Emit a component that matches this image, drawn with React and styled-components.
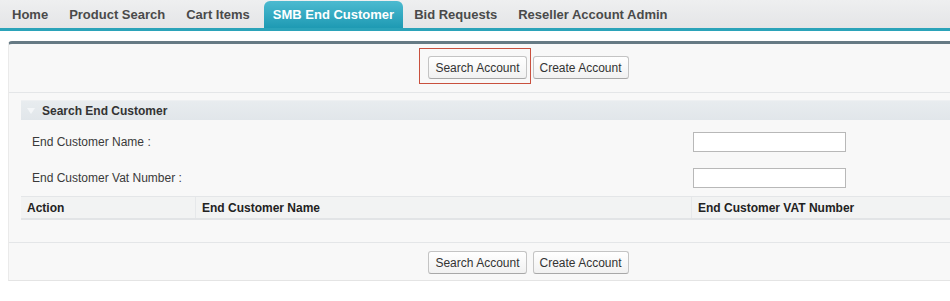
import React from 'react';
import styled, { createGlobalStyle } from 'styled-components';

const GlobalStyle = createGlobalStyle`
    body{
        margin: 0;
        background: #fff;
        font-family: "Liberation Sans", Arial, sans-serif;
        font-size: 12px;
        color: #333;
        overflow: hidden;
    }
`

const TabBar = styled.div`
    display: flex;
    align-items: flex-end;
    height: 28px;
    padding-left: 2px;
    background: linear-gradient(#eeeff0, #e4e5e7);
    border-bottom: 3px solid #2ba3b9;
`

const Tab = styled.div`
    height: ${({active}) => active ? "27px" : "28px"};
    display: flex;
    align-items: center;
    padding: 0 ${({active}) => active ? "9px" : "10px"};
    margin: ${({active}) => active ? "0 1px 0 3px" : "0 1px 0 0"};
    font-size: 13px;
    font-weight: bold;
    color: ${({active}) => active ? "#fff" : "#4a4a4a"};
    background: ${({active}) => active ? "linear-gradient(#4cbad0, #1e9ab3)" : "transparent"};
    border-radius: ${({active}) => active ? "6px 6px 0 0" : "0"};
`

const Page = styled.div`
    padding: 10px 0 0 8px;
`

const Panel = styled.div`
    width: 1039px;
    background: #f8f8f8;
    border-top: 3px solid #667a84;
    border-left: 1px solid #eaeaea;
    border-bottom: 1px solid #e4e4e4;
    border-radius: 4px 0 0 0;
`

const ButtonRow = styled.div`
    display: flex;
    justify-content: center;
    gap: 6px;
    padding: ${({bottom}) => bottom ? "8px 0 6px" : "12px 0 13px"};
    border-bottom: ${({bottom}) => bottom ? "none" : "1px solid #e4e6e8"};
    border-top: ${({bottom}) => bottom ? "1px solid #e4e6e8" : "none"};
`

const Marked = styled.span`
    position: relative;
    display: inline-flex;

    &::after{
        content: "";
        position: absolute;
        top: -8px;
        bottom: -5px;
        left: -9px;
        right: -4px;
        border: 1px solid #c9503e;
    }
`

const Button = styled.button`
    font-family: "Liberation Sans", Arial, sans-serif;
    font-size: 12px;
    color: #333;
    height: 23px;
    padding: 0 6px;
    background: linear-gradient(#ffffff, #f1f1f1);
    border: 1px solid #c4c4c4;
    border-bottom-color: #a8a8a8;
    border-radius: 3px;
`

const Body = styled.div`
    padding: 7px 0 22px 12px;
`

const SectionHead = styled.div`
    display: flex;
    align-items: center;
    height: 19px;
    padding-left: 6px;
    gap: 7px;
    background: linear-gradient(#e8ecef, #e1e6ea);
    border-top: 1px solid #eef0f2;
    font-weight: bold;
    color: #333;
`

const Arrow = styled.span`
    width: 0;
    height: 0;
    border-left: 4px solid transparent;
    border-right: 4px solid transparent;
    border-top: 6px solid #f4f6f8;
`

const Fields = styled.div`
    padding-top: 4px;
`

const FieldRow = styled.div`
    display: grid;
    grid-template-columns: 661px 1fr;
    align-items: center;
    height: 36px;
    padding-left: 11px;
`

const Label = styled.span`
    color: #3a3a3a;
`

const Input = styled.div`
    width: 151px;
    height: 18px;
    background: #fff;
    border: 1px solid #b8b8b8;
`

const Table = styled.div`
    display: grid;
    grid-template-columns: 174px 496px 1fr;
    height: 21px;
    background: #f2f3f3;
    border-top: 1px solid #e4e6e8;
    border-bottom: 2px solid #e2e4e6;
`

const HeadCell = styled.div`
    display: flex;
    align-items: center;
    padding-left: 6px;
    font-weight: bold;
    color: #222;
    border-left: ${({first}) => first ? "none" : "1px solid #e6e8ea"};
`

function Buttons({marked}){
    return(
        <>
            {marked ? <Marked><Button>Search Account</Button></Marked> : <Button>Search Account</Button>}
            <Button>Create Account</Button>
        </>
    )
}

export default function App(){
    const tabs = ["Home", "Product Search", "Cart Items", "SMB End Customer", "Bid Requests", "Reseller Account Admin"]

    return(
        <>
            <GlobalStyle/>
            <TabBar>
                {tabs.map(tab => (
                    <Tab key={tab} active={tab === "SMB End Customer"}>{tab}</Tab>
                ))}
            </TabBar>
            <Page>
                <Panel>
                    <ButtonRow>
                        <Buttons marked/>
                    </ButtonRow>
                    <Body>
                        <SectionHead><Arrow/>Search End Customer</SectionHead>
                        <Fields>
                            <FieldRow>
                                <Label>End Customer Name :</Label>
                                <Input/>
                            </FieldRow>
                            <FieldRow>
                                <Label>End Customer Vat Number :</Label>
                                <Input/>
                            </FieldRow>
                        </Fields>
                        <Table>
                            <HeadCell first>Action</HeadCell>
                            <HeadCell>End Customer Name</HeadCell>
                            <HeadCell>End Customer VAT Number</HeadCell>
                        </Table>
                    </Body>
                    <ButtonRow bottom>
                        <Buttons/>
                    </ButtonRow>
                </Panel>
            </Page>
        </>
    )
}
